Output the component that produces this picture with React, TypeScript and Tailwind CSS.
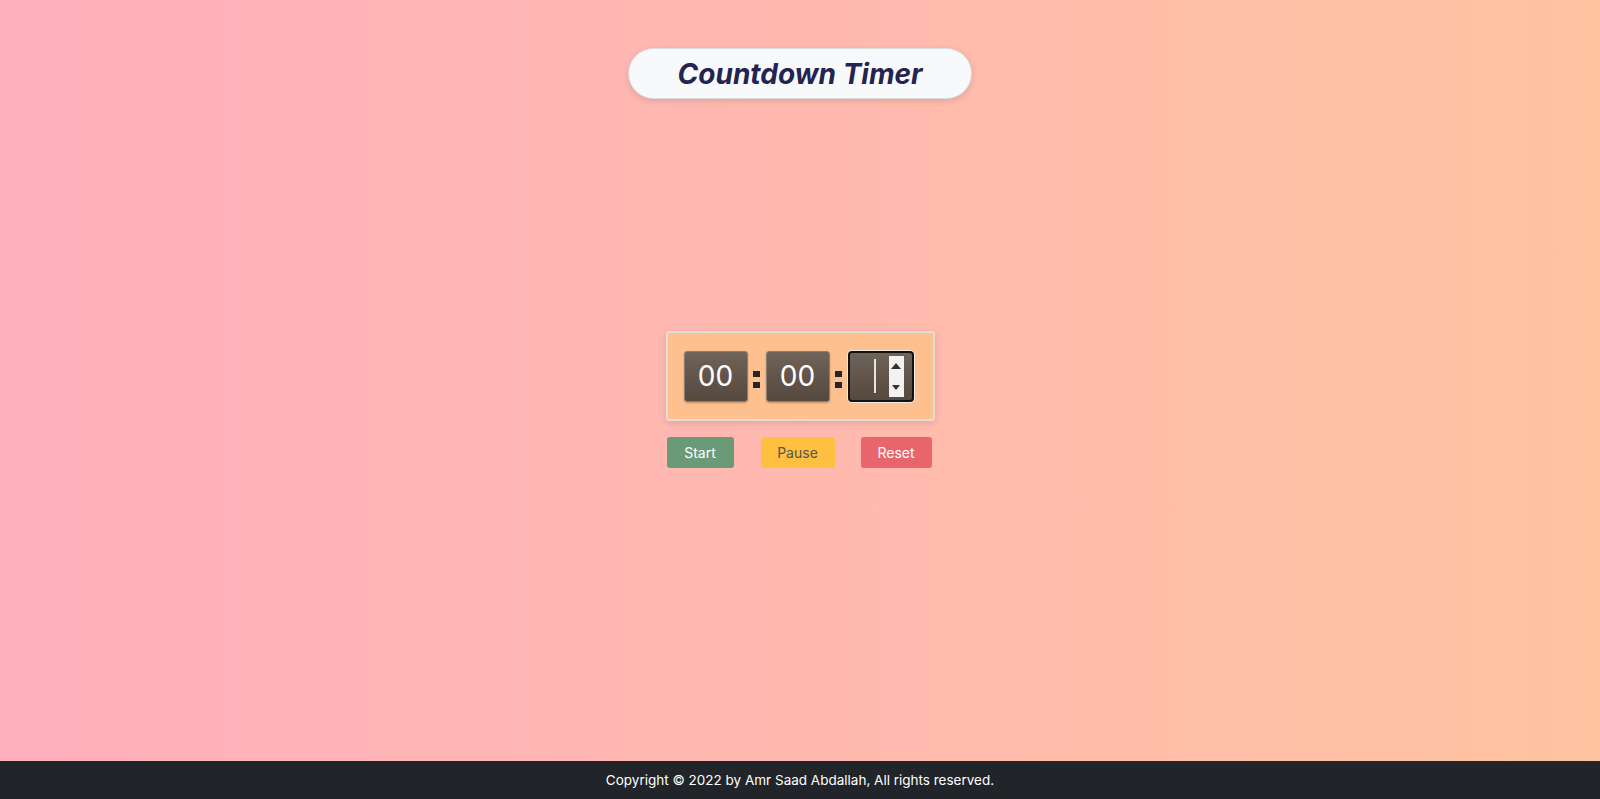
import React from "react";

function Digit({ v }: { v: string }) {
  return (
    <div className="w-[64px] h-[51px] rounded-[3px] border border-[#8a7d72] bg-gradient-to-b from-[#6f635a] to-[#55493e] flex items-center justify-center text-white text-[28px] leading-none shadow-[0_1px_2px_rgba(0,0,0,0.25)]" style={{ fontFamily: "Inter, 'Open Sans', sans-serif" }}>
      {v}
    </div>
  );
}

function Colon() {
  return (
    <div className="w-[18px] flex flex-col items-center justify-center gap-[5px] pt-[6px]">
      <div className="w-[7px] h-[6px] bg-[#24262b]" />
      <div className="w-[7px] h-[6px] bg-[#24262b]" />
    </div>
  );
}

export default function App() {
  return (
    <div
      className="min-h-[799px] flex flex-col bg-gradient-to-r from-[#ffafbd] to-[#ffc3a0]"
      style={{ fontFamily: "Inter, 'Open Sans', sans-serif" }}
    >
      <header className="flex justify-center pt-[48px]">
        <div className="w-[344px] h-[51px] rounded-full bg-[#f8f9fb] border border-[#dcdcdc] shadow-[0_2px_6px_rgba(0,0,0,0.12)] flex items-center justify-center">
          <span className="text-[28px] font-bold italic text-[#23244f]">Countdown Timer</span>
        </div>
      </header>
      <main className="flex-1 flex flex-col items-center pt-[232px]">
        <div className="w-[269px] h-[90px] border-2 border-[#e4ddd8] rounded-[3px] bg-[#ffc08f] shadow-[0_2px_6px_rgba(0,0,0,0.12)] flex items-center pl-[16px]">
          <Digit v="00" />
          <Colon />
          <Digit v="00" />
          <Colon />
          <div className="w-[66px] h-[51px] rounded-[4px] border-2 border-[#15110e] bg-gradient-to-b from-[#6f635a] to-[#55493e] flex items-center justify-end pr-[8px] ring-1 ring-[#f3ece6]">
            <div className="w-[2px] h-[34px] bg-[#e8e4e0] mr-[13px]" />
            <div className="w-[15px] h-[41px] bg-[#f2f2f2] flex flex-col items-center justify-between py-[7px]">
              <div className="w-0 h-0 border-l-[5px] border-r-[5px] border-b-[6px] border-l-transparent border-r-transparent border-b-[#333]" />
              <div className="w-0 h-0 border-l-[4px] border-r-[4px] border-t-[5px] border-l-transparent border-r-transparent border-t-[#333]" />
            </div>
          </div>
        </div>
        <div className="flex items-center mt-[16px] w-[269px] pl-[1px]">
          <button className="w-[67px] h-[31px] rounded-[3px] bg-[#6b9a78] text-white text-[14px]">Start</button>
          <button className="w-[74px] h-[31px] rounded-[3px] bg-[#ffbf40] text-[#555] text-[14px] ml-[27px]">Pause</button>
          <button className="w-[71px] h-[31px] rounded-[3px] bg-[#e9656c] text-white text-[14px] ml-[26px]">Reset</button>
        </div>
      </main>
      <footer className="h-[38px] bg-[#212529] flex items-center justify-center text-white text-[13.5px]">
        Copyright © 2022 by Amr Saad Abdallah, All rights reserved.
      </footer>
    </div>
  );
}
